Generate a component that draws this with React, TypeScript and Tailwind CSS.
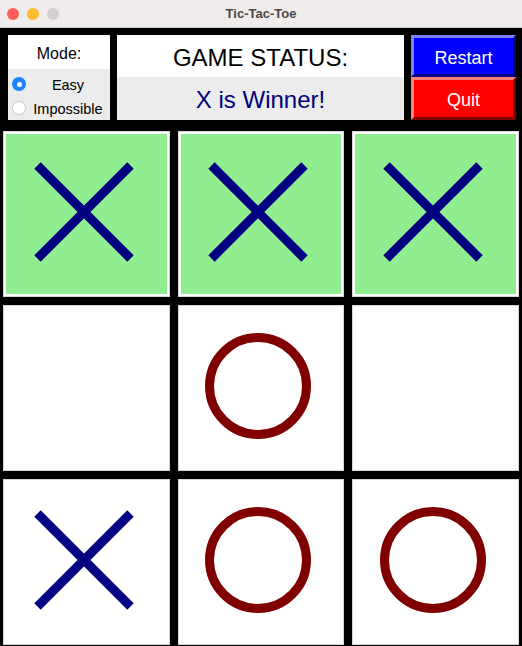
import React from "react";

type Mark = "X" | "O" | "";

const board: Mark[] = ["X", "X", "X", "", "O", "", "X", "O", "O"];
const winLine = [0, 1, 2];

function XMark() {
  return (
    <svg width="100" height="100" viewBox="0 0 100 100">
      <line x1="3.5" y1="3.5" x2="96.5" y2="96.5" stroke="#000080" strokeWidth="9" />
      <line x1="96.5" y1="3.5" x2="3.5" y2="96.5" stroke="#000080" strokeWidth="9" />
    </svg>
  );
}

function OMark() {
  return (
    <svg width="106" height="106" viewBox="0 0 106 106">
      <circle cx="53" cy="53" r="48.5" fill="none" stroke="#800000" strokeWidth="9" />
    </svg>
  );
}

function Radio({ checked }: { checked: boolean }) {
  return checked ? (
    <span className="flex h-[14px] w-[14px] items-center justify-center rounded-full bg-[#1b84ff]">
      <span className="h-[5px] w-[5px] rounded-full bg-white" />
    </span>
  ) : (
    <span className="h-[14px] w-[14px] rounded-full border border-[#c8c8c8] bg-white" />
  );
}

export default function App() {
  return (
    <div
      className="w-[522px] h-[646px] overflow-hidden bg-black"
      style={{ fontFamily: '"Liberation Sans", Arial, sans-serif' }}
    >
      {/* title bar */}
      <div className="relative flex h-[28px] items-center justify-center border-b border-[#d2cdcd] bg-[#f0ecec]">
        <div className="absolute left-[7px] top-[8px] flex gap-[8px]">
          <span className="h-[12px] w-[12px] rounded-full bg-[#fe5f57]" />
          <span className="h-[12px] w-[12px] rounded-full bg-[#febc2e]" />
          <span className="h-[12px] w-[12px] rounded-full bg-[#d3d0d0]" />
        </div>
        <span className="text-[13px] font-bold text-[#4b4848]">Tic-Tac-Toe</span>
      </div>

      {/* top panel */}
      <div className="flex h-[85px] mt-[7px] pl-[8px] gap-[7px]">
        <div className="flex w-[102px] flex-col">
          <div className="flex h-[36px] items-center justify-center bg-white pt-[4px] text-[16px] text-black">
            Mode:
          </div>
          <div className="flex flex-1 flex-col bg-[#ececec] pt-[3px]">
            <div className="flex h-[24px] items-center pl-[4px]">
              <Radio checked />
              <span className="flex-1 pt-[3px] text-center text-[14.5px] text-black">Easy</span>
            </div>
            <div className="flex h-[24px] items-center pl-[4px]">
              <Radio checked={false} />
              <span className="flex-1 pt-[3px] text-center text-[14.5px] text-black">Impossible</span>
            </div>
          </div>
        </div>

        <div className="flex w-[287px] flex-col">
          <div className="flex h-[42px] items-center justify-center bg-white pt-[4px] text-[24px] text-black">
            GAME STATUS:
          </div>
          <div className="flex flex-1 items-center justify-center bg-[#ececec] pt-[2px] text-[24px] text-[#000080]">
            X is Winner!
          </div>
        </div>

        <div className="flex w-[105px] flex-col">
          <button className="flex h-[42px] items-center justify-center border-[3px] border-t-[#8080ff] border-l-[#8080ff] border-b-[#000080] border-r-[#000080] bg-[#0000ff] pt-[4px] text-[18px] text-white">
            Restart
          </button>
          <button className="flex flex-1 items-center justify-center border-[3px] border-t-[#ff8080] border-l-[#ff8080] border-b-[#800000] border-r-[#800000] bg-[#ff0000] pt-[4px] text-[18px] text-white">
            Quit
          </button>
        </div>
      </div>

      {/* board */}
      <div className="mt-[11px] grid grid-cols-3 gap-x-[8px] gap-y-[8px] px-[3px]">
        {board.map((m, i) => (
          <div key={i} className="h-[166px] border border-[#d6d6d6] bg-white p-[2px]">
            <div
              className={`flex h-full w-full items-center justify-center pr-[5px] pb-[4px] ${
                winLine.includes(i) ? "bg-[#90ee90]" : "bg-white"
              }`}
            >
              {m === "X" && <XMark />}
              {m === "O" && <OMark />}
            </div>
          </div>
        ))}
      </div>
    </div>
  );
}
